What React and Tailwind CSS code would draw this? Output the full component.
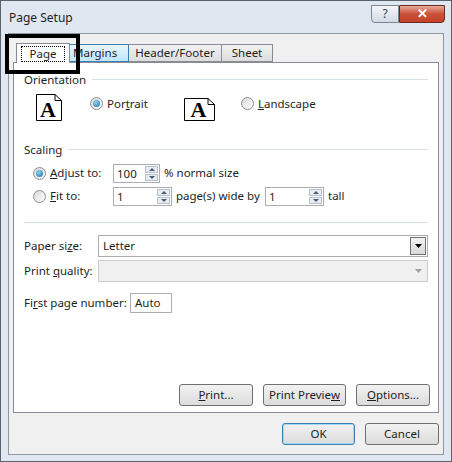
const F = { fontFamily: '"Segoe UI","Noto Sans","Liberation Sans",sans-serif' };

function Radio({ on }) {
  return (
    <span className="w-[13px] h-[13px] rounded-full border border-[#8e8f8f] bg-gradient-to-br from-[#d8d8d8] to-[#ffffff] flex items-center justify-center shrink-0">
      {on && <span className="w-[7px] h-[7px] rounded-full bg-[radial-gradient(circle_at_40%_35%,#8fd3f5,#1a6fa0)]" />}
    </span>
  );
}

function Spin({ w, v }) {
  return (
    <div className="flex h-[19px] border border-[#abadb3] bg-white shrink-0" style={{ width: w }}>
      <div className="flex-1 pl-[3px] leading-[17px]">{v}</div>
      <div className="w-[15px] flex flex-col gap-[1px] p-[1px]">
        <div className="flex-1 bg-[#e8ecf2] border border-[#b8c2cf] flex items-center justify-center">
          <svg width="6" height="3"><path d="M0 3L3 0L6 3Z" fill="#4a5a70" /></svg>
        </div>
        <div className="flex-1 bg-[#e8ecf2] border border-[#b8c2cf] flex items-center justify-center">
          <svg width="6" height="3"><path d="M0 0L3 3L6 0Z" fill="#4a5a70" /></svg>
        </div>
      </div>
    </div>
  );
}

function PageIcon({ w, h }) {
  return (
    <svg width={w} height={h} viewBox={`0 0 ${w} ${h}`}>
      <path d={`M0.5 0.5H${w - 7}L${w - 0.5} 6.5V${h - 0.5}H0.5Z`} fill="white" stroke="black" />
      <path d={`M${w - 7} 0.5V6.5H${w - 0.5}`} fill="none" stroke="black" />
      <text x={w / 2 - 1} y={h - 4} textAnchor="middle" fontFamily="Liberation Serif" fontSize="22" fontWeight="bold">A</text>
    </svg>
  );
}

function Btn({ children, w, def }) {
  return (
    <div className={`h-[22px] rounded-[3px] border ${def ? 'border-[#3c7fb1] shadow-[inset_0_0_0_1px_#9fd8f5]' : 'border-[#707070]'} bg-gradient-to-b from-[#f2f2f2] to-[#dcdcdc] flex items-center justify-center whitespace-nowrap`} style={{ width: w }}>
      {children}
    </div>
  );
}

export default function App() {
  return (
    <div style={F} className="w-[452px] h-[462px] bg-[#dfe7f0] border border-[#5a6470] relative text-[#1e1e1e] text-[11.5px] flex flex-col">
      <div className="h-[32px] flex items-start justify-between">
        <div className="pl-[8px] pt-[8px] text-[12px]">Page Setup</div>
        <div className="flex pt-[4px] pr-[6px]">
          <div className="w-[28px] h-[18px] border border-[#7b8594] rounded-bl-[4px] bg-gradient-to-b from-[#f4f6f9] to-[#d4dbe4] flex items-center justify-center text-[12px] text-[#3b4250]">?</div>
          <div className="w-[46px] h-[18px] border border-[#6b2a20] rounded-br-[4px] bg-gradient-to-b from-[#e9a99a] via-[#c9503a] to-[#c7432b] flex items-center justify-center text-white font-bold text-[13px]">✕</div>
        </div>
      </div>
      <div className="mx-[7px] flex-1 mb-[6px] bg-[#f0f0f0] border border-[#8d96a2] flex flex-col px-[4px] pt-[8px]">
        <div className="flex items-end h-[20px] pl-[3px] whitespace-nowrap">
          <div className="w-[54px] h-[20px] bg-white border border-b-0 border-[#898c95] flex items-center justify-center relative z-10 -mb-[1px]">
            <span className="border border-dotted border-black px-[8px] leading-[14px]">Page</span>
          </div>
          <div className="w-[59px] h-[18px] border border-[#3c7fb1] border-l-0 bg-gradient-to-b from-[#eaf6fd] to-[#bee6fd] flex items-center pl-[3px]">Margins</div>
          <div className="w-[93px] h-[18px] border border-[#898c95] border-l-0 bg-gradient-to-b from-[#f2f2f2] to-[#dddddd] flex items-center justify-center">Header/Footer</div>
          <div className="w-[51px] h-[18px] border border-[#898c95] border-l-0 bg-gradient-to-b from-[#f2f2f2] to-[#dddddd] flex items-center justify-center">Sheet</div>
        </div>
        <div className="h-[351px] bg-white border border-[#898c95] px-[10px] pt-[8px] flex flex-col whitespace-nowrap">
          <div className="flex items-center gap-[6px]"><span>Orientation</span><div className="flex-1 h-px bg-[#d5dfe5]" /></div>
          <div className="flex items-center mt-[6px] h-[27px]">
            <div className="ml-[12px]"><PageIcon w={26} h={27} /></div>
            <div className="ml-[28px] flex items-center gap-[4px] -mt-[8px]"><Radio on /><span>Por<u>t</u>rait</span></div>
            <div className="ml-[36px] mt-[3px]"><PageIcon w={31} h={23} /></div>
            <div className="ml-[26px] flex items-center gap-[4px] -mt-[8px]"><Radio /><span><u>L</u>andscape</span></div>
          </div>
          <div className="flex items-center gap-[6px] mt-[20px]"><span>Scaling</span><div className="flex-1 h-px bg-[#d5dfe5]" /></div>
          <div className="flex items-center mt-[5px] ml-[9px]">
            <div className="w-[80px] flex items-center gap-[4px]"><Radio on /><span><u>A</u>djust to:</span></div>
            <Spin w={47} v="100" />
            <span className="ml-[4px]">% normal size</span>
          </div>
          <div className="flex items-center mt-[4px] ml-[9px]">
            <div className="w-[80px] flex items-center gap-[4px]"><Radio /><span><u>F</u>it to:</span></div>
            <Spin w={59} v="1" />
            <span className="ml-[4px] w-[89px]">page(s) wide by</span>
            <Spin w={59} v="1" />
            <span className="ml-[4px]">tall</span>
          </div>
          <div className="h-px bg-[#d5dfe5] mt-[16px]" />
          <div className="flex items-center mt-[12px]">
            <span className="w-[74px]">Paper si<u>z</u>e:</span>
            <div className="flex-1 h-[22px] border border-[#abadb3] flex items-center">
              <span className="flex-1 pl-[4px]">Letter</span>
              <div className="w-[16px] h-[18px] mr-[1px] border border-[#707070] bg-gradient-to-b from-[#f2f2f2] to-[#d9d9d9] flex items-center justify-center">
                <svg width="7" height="4"><path d="M0 0H7L3.5 4Z" fill="black" /></svg>
              </div>
            </div>
          </div>
          <div className="flex items-center mt-[3px]">
            <span className="w-[74px]">Print <u>q</u>uality:</span>
            <div className="flex-1 h-[22px] border border-[#cccccc] bg-[#f0f0f0] flex items-center justify-end pr-[5px]">
              <svg width="7" height="4"><path d="M0 0H7L3.5 4Z" fill="#a0a0a0" /></svg>
            </div>
          </div>
          <div className="flex items-center mt-[11px]">
            <span className="w-[106px]">Fi<u>r</u>st page number:</span>
            <div className="w-[42px] h-[20px] border border-[#abadb3] pl-[4px] leading-[18px]">Auto</div>
          </div>
          <div className="flex-1" />
          <div className="flex justify-end gap-[10px] mb-[6px] -mr-[2px]">
            <Btn w={74}><u>P</u>rint...</Btn>
            <Btn w={83}>Print Previe<u>w</u></Btn>
            <Btn w={74}><u>O</u>ptions...</Btn>
          </div>
        </div>
        <div className="flex justify-end gap-[10px] mt-[10px]">
          <Btn w={73} def>OK</Btn>
          <Btn w={74}>Cancel</Btn>
        </div>
      </div>
      <div className="absolute left-[4px] top-[33px] w-[75px] h-[40px] border-[4px] border-black" />
    </div>
  );
}
